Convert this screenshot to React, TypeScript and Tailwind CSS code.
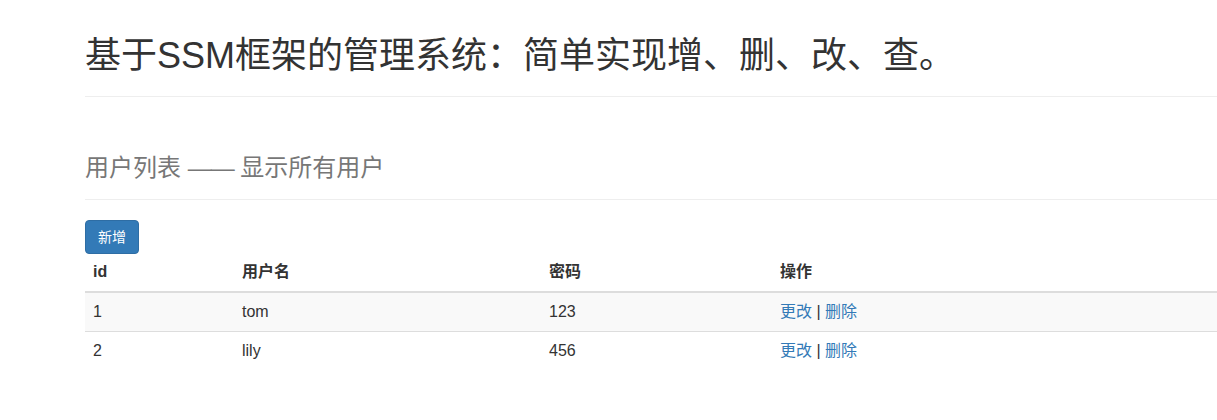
export default function App() {
  const rows = [
    { id: 1, name: "tom", pwd: "123" },
    { id: 2, name: "lily", pwd: "456" },
  ];
  const th = "px-[8px] pt-[7px] pb-[8px] leading-[22px] text-left font-bold";
  const td = "px-[8px] py-[8px] leading-[22px]";
  return (
    <div
      className="pl-[85px] bg-white text-[#333] text-[14px] leading-[20px] min-h-[420px]"
      style={{ fontFamily: '"Liberation Sans", "Noto Sans CJK SC", sans-serif' }}
    >
      <h1 className="pt-[36px] text-[36px] leading-[40px] font-normal pb-[20px] border-b border-[#eee]">
        基于SSM框架的管理系统：简单实现增、删、改、查。
      </h1>
      <h3 className="mt-[58px] text-[24px] leading-[26px] text-[#777] font-normal pb-[18px] border-b border-[#eee]">
        用户列表 <span className="tracking-[-1px]">——</span> 显示所有用户
      </h3>
      <button className="mt-[20px] h-[34px] px-[12px] rounded-[4px] bg-[#337ab7] border border-[#2e6da4] text-white text-[14px] leading-[20px]">
        新增
      </button>
      <table className="w-full border-collapse text-[16px]">
        <thead>
          <tr className="border-b-2 border-[#ddd]">
            <th className={`w-[149px] ${th}`}>id</th>
            <th className={`w-[307px] ${th}`}>用户名</th>
            <th className={`w-[231px] ${th}`}>密码</th>
            <th className={th}>操作</th>
          </tr>
        </thead>
        <tbody>
          {rows.map((r, i) => (
            <tr key={r.id} className={`border-t border-[#ddd] ${i % 2 === 0 ? "bg-[#f9f9f9]" : "bg-white"}`}>
              <td className={td}>{r.id}</td>
              <td className={td}>{r.name}</td>
              <td className={td}>{r.pwd}</td>
              <td className={td}>
                <a className="text-[#337ab7]" href="#">更改</a> | <a className="text-[#337ab7]" href="#">删除</a>
              </td>
            </tr>
          ))}
        </tbody>
      </table>
    </div>
  );
}
